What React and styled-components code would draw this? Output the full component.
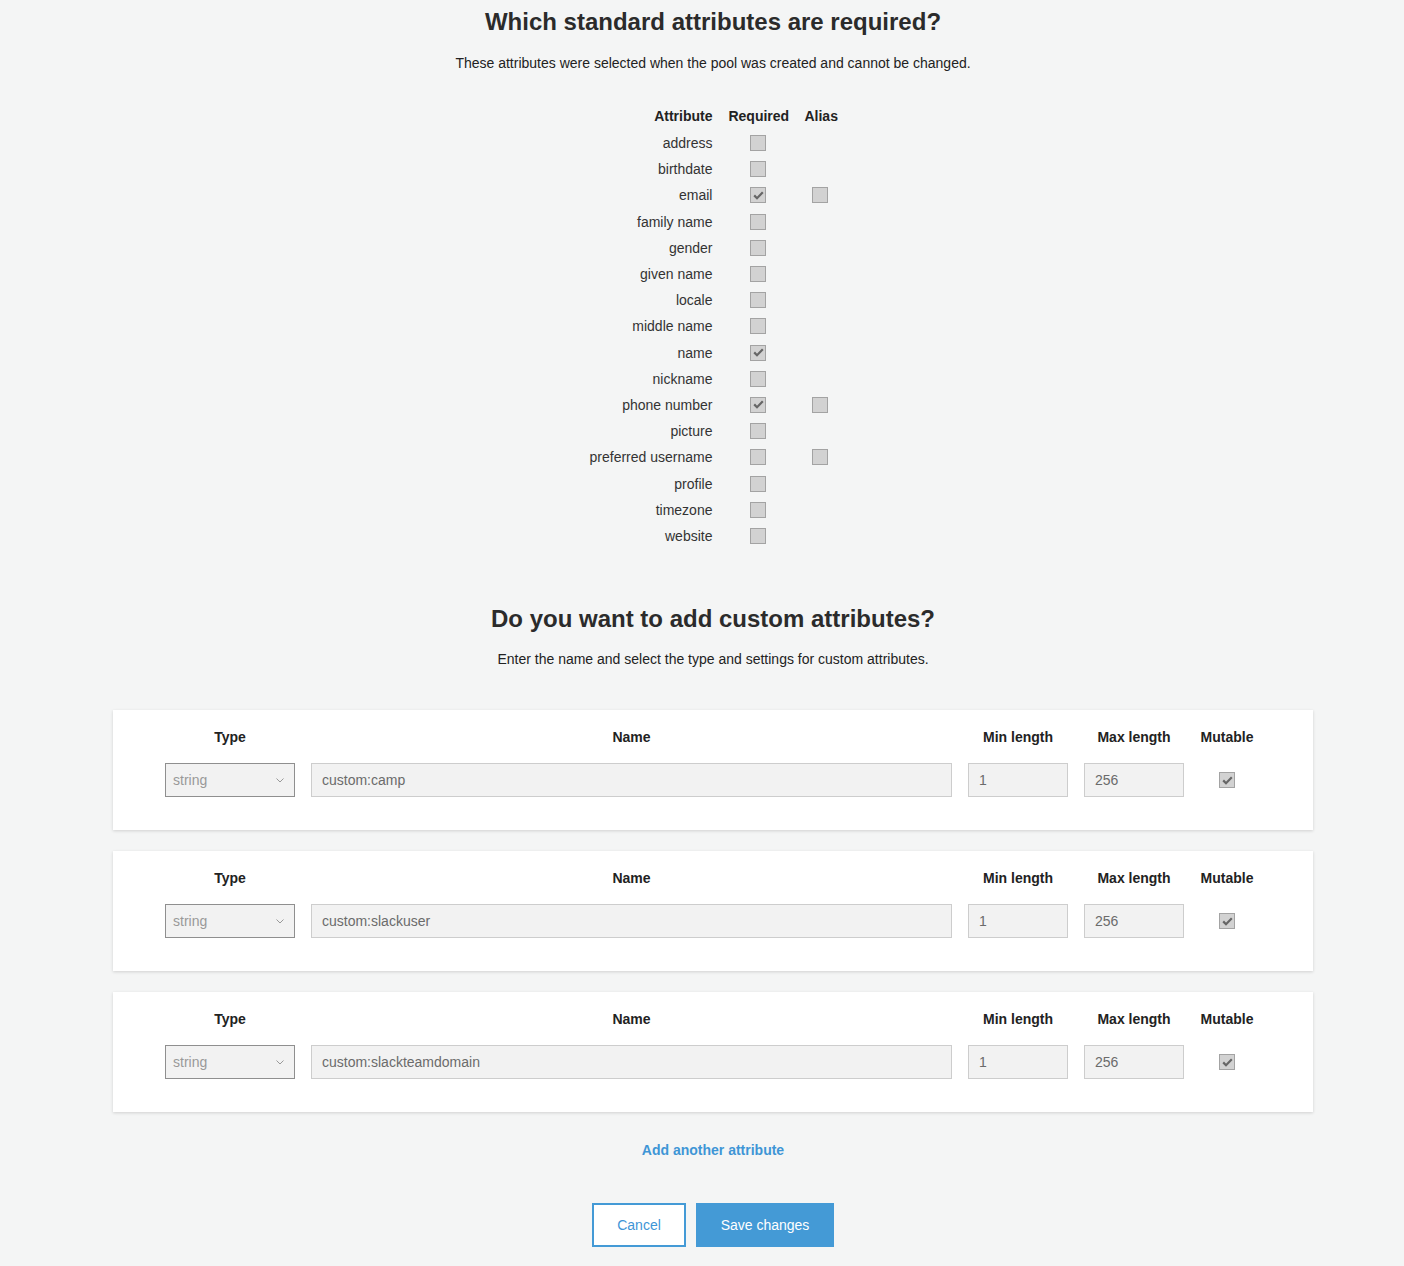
import React from "react";
import styled, { createGlobalStyle } from "styled-components";

const GlobalStyle = createGlobalStyle`
  html, body {
    margin: 0;
    padding: 0;
    background: #f4f5f5;
  }
  body {
    font-family: "Liberation Sans", Arial, sans-serif;
    color: #333;
  }
`;

const Page = styled.div`
  padding: 0 0 19px 22px;
  display: flex;
  flex-direction: column;
  align-items: center;
`;

const Title = styled.h2`
  margin: ${(p) => p.$top || 7}px 0 0;
  font-size: 24px;
  line-height: 30px;
  font-weight: bold;
  color: #2b2b2b;
  text-align: center;
`;

const Lead = styled.p`
  margin: ${(p) => p.$top || 17}px 0 0;
  font-size: 14px;
  line-height: 18px;
  color: #222;
  text-align: center;
`;

const AttrGrid = styled.div`
  margin-top: 30px;
  display: grid;
  grid-template-columns: auto 60px 32px;
  grid-template-rows: 28px;
  column-gap: 16px;
  grid-auto-rows: 26.2px;
  font-size: 14px;
  align-items: center;
`;

const HeadCell = styled.div`
  font-weight: bold;
  color: #222;
  text-align: ${(p) => p.$align || "center"};
  line-height: 18px;
`;

const NameCell = styled.div`
  text-align: right;
  color: #333;
  line-height: 18px;
`;

const BoxCell = styled.div`
  display: flex;
  justify-content: center;
  align-items: center;
`;

const Box = styled.span`
  display: inline-flex;
  align-items: center;
  justify-content: center;
  width: 14px;
  height: 14px;
  background: #d2d2d2;
  border: 1px solid #a3a3a3;
  box-sizing: content-box;
`;

const Check = ({ on }) => (
  <Box>
    {on && (
      <svg width="11" height="9" viewBox="0 0 11 9">
        <path d="M1.2 4.4 L4 7.2 L9.8 1.3" fill="none" stroke="#666" strokeWidth="2.2" />
      </svg>
    )}
  </Box>
);

const CardList = styled.div`
  margin-top: 42px;
  width: 1200px;
  display: flex;
  flex-direction: column;
  gap: 21px;
`;

const Card = styled.div`
  background: #fff;
  box-shadow: 0 1px 3px rgba(0, 0, 0, 0.15);
  padding: 18px 59px 33px 52px;
  display: grid;
  grid-template-columns: 130px 1fr 100px 100px 54px;
  column-gap: 16px;
  row-gap: 17px;
  align-items: center;
`;

const ColHead = styled.div`
  font-size: 14px;
  line-height: 18px;
  font-weight: bold;
  color: #222;
  text-align: center;
  white-space: nowrap;
`;

const Field = styled.div`
  height: 34px;
  box-sizing: border-box;
  background: #f2f2f2;
  border: 1px solid ${(p) => (p.$select ? "#8f8f8f" : "#cdcdcd")};
  display: flex;
  align-items: center;
  justify-content: space-between;
  padding: 0 10px 0 ${(p) => (p.$select ? 7 : 10)}px;
  font-size: 14px;
  color: ${(p) => (p.$select ? "#999" : "#6b6b6b")};
`;

const Chevron = () => (
  <svg width="8" height="5" viewBox="0 0 8 5">
    <path d="M0.5 0.5 L4 4 L7.5 0.5" fill="none" stroke="#999" strokeWidth="1" />
  </svg>
);

const Footer = styled.div`
  display: flex;
  flex-direction: column;
  align-items: center;
`;

const AddLink = styled.a`
  margin-top: 29px;
  font-size: 14px;
  line-height: 18px;
  font-weight: bold;
  color: #3e95d6;
  text-decoration: none;
  cursor: pointer;
`;

const Buttons = styled.div`
  margin-top: 44px;
  display: flex;
  gap: 10px;
`;

const Button = styled.button`
  width: ${(p) => (p.$primary ? 138 : 94)}px;
  height: 44px;
  box-sizing: border-box;
  padding: 0;
  font-family: "Liberation Sans", Arial, sans-serif;
  font-size: 14px;
  border: 2px solid #449ad6;
  background: ${(p) => (p.$primary ? "#449ad6" : "#fff")};
  color: ${(p) => (p.$primary ? "#fff" : "#3e95d6")};
  cursor: pointer;
`;

const standard = [
  ["address", false, null],
  ["birthdate", false, null],
  ["email", true, false],
  ["family name", false, null],
  ["gender", false, null],
  ["given name", false, null],
  ["locale", false, null],
  ["middle name", false, null],
  ["name", true, null],
  ["nickname", false, null],
  ["phone number", true, false],
  ["picture", false, null],
  ["preferred username", false, false],
  ["profile", false, null],
  ["timezone", false, null],
  ["website", false, null],
];

const custom = ["custom:camp", "custom:slackuser", "custom:slackteamdomain"];

const App = () => {
  return (
    <Page>
      <GlobalStyle />
      <Title>Which standard attributes are required?</Title>
      <Lead>These attributes were selected when the pool was created and cannot be changed.</Lead>

      <AttrGrid>
        <HeadCell $align="right">Attribute</HeadCell>
        <HeadCell>Required</HeadCell>
        <HeadCell>Alias</HeadCell>
        {standard.map(([name, req, alias]) => (
          <React.Fragment key={name}>
            <NameCell>{name}</NameCell>
            <BoxCell>
              <Check on={req} />
            </BoxCell>
            <BoxCell>{alias !== null && <Check on={alias} />}</BoxCell>
          </React.Fragment>
        ))}
      </AttrGrid>

      <Title $top={55}>Do you want to add custom attributes?</Title>
      <Lead $top={16}>Enter the name and select the type and settings for custom attributes.</Lead>

      <CardList>
        {custom.map((name) => (
          <Card key={name}>
            <ColHead>Type</ColHead>
            <ColHead>Name</ColHead>
            <ColHead>Min length</ColHead>
            <ColHead>Max length</ColHead>
            <ColHead>Mutable</ColHead>
            <Field $select>
              string
              <Chevron />
            </Field>
            <Field>{name}</Field>
            <Field>1</Field>
            <Field>256</Field>
            <BoxCell>
              <Check on />
            </BoxCell>
          </Card>
        ))}
      </CardList>

      <Footer>
        <AddLink>Add another attribute</AddLink>
        <Buttons>
          <Button>Cancel</Button>
          <Button $primary>Save changes</Button>
        </Buttons>
      </Footer>
    </Page>
  );
};

export default App;
